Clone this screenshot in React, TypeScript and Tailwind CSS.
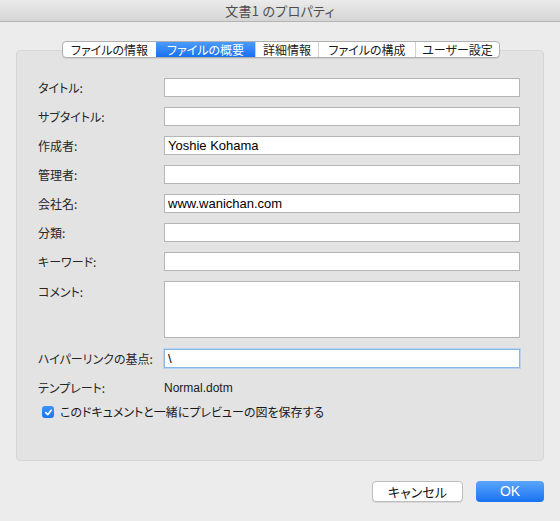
const jp = { fontFamily: '"Noto Sans CJK JP", "Liberation Sans", sans-serif' };
const latin = { fontFamily: '"Liberation Sans", "Noto Sans CJK JP", sans-serif' };

const tabs = ['ファイルの情報', 'ファイルの概要', '詳細情報', 'ファイルの構成', 'ユーザー設定'];
const tabWidths = ['w-[93px]', 'w-[99px]', 'w-[63px]', 'w-[97px]', 'w-[84px]'];

function Field({ label, value, focused }: { label: string; value?: string; focused?: boolean }) {
  return (
    <div className="flex items-center h-[19px]">
      <div className="w-[126px] text-[12px] text-[#262626] leading-none">{label}</div>
      <div
        className={`flex-1 h-[19px] bg-white flex items-center px-[3px] text-[13px] text-black ${
          focused ? 'border border-[#8cb6e6] shadow-[0_0_0_1px_#b7d3f2]' : 'border border-[#b5b5b5]'
        }`}
        style={latin}
      >
        {value}
      </div>
    </div>
  );
}

export default function App() {
  return (
    <div
      className="w-[560px] h-[521px] bg-[#ececec] flex flex-col overflow-hidden [font-feature-settings:'palt']"
      style={jp}
    >
      <div className="h-[22px] flex-shrink-0 flex items-center justify-center bg-gradient-to-b from-[#ebebeb] to-[#d5d5d5] border-b border-[#b4b4b4]">
        <span className="text-[13px] text-[#4d4d4d] tracking-[0.3px]">文書1 のプロパティ</span>
      </div>

      <div className="flex justify-center mt-[19px] relative z-10 pl-[2px]">
        <div className="flex h-[17px] bg-white border border-[#b0b0b0] rounded-[4px] overflow-hidden shadow-[0_1px_0_rgba(0,0,0,0.08)]">
          {tabs.map((t, i) => (
            <div
              key={t}
              className={`${tabWidths[i]} flex items-center justify-center text-[12px] leading-none ${
                i === 1
                  ? 'bg-gradient-to-b from-[#4a9bf9] to-[#1870f0] text-white'
                  : 'text-[#1a1a1a]'
              } ${i > 1 ? 'border-l border-[#d0d0d0]' : ''}`}
            >
              {t}
            </div>
          ))}
        </div>
      </div>

      <div className="mx-[16px] mt-[-8px] h-[411px] bg-[#e3e3e3] border border-[#d6d6d6] rounded-[4px] pt-[27px] pl-[21px] pr-[23px] flex flex-col">
        <div className="flex flex-col gap-[10px]">
          <Field label="タイトル:" />
          <Field label="サブタイトル:" />
          <Field label="作成者:" value="Yoshie Kohama" />
          <Field label="管理者:" />
          <Field label="会社名:" value="www.wanichan.com" />
          <Field label="分類:" />
          <Field label="キーワード:" />
          <div className="flex">
            <div className="w-[126px] text-[12px] text-[#262626] leading-none pt-[5px]">コメント:</div>
            <div className="flex-1 h-[57px] bg-white border border-[#b5b5b5]" />
          </div>
        </div>
        <div className="mt-[11px]">
          <Field label="ハイパーリンクの基点:" value="\" focused />
        </div>
        <div className="flex items-center mt-[10px] h-[19px]">
          <div className="w-[126px] text-[12px] text-[#262626] leading-none">テンプレート:</div>
          <div className="text-[12px] text-[#1a1a1a]" style={latin}>
            Normal.dotm
          </div>
        </div>
        <div className="flex items-center mt-[9px] pl-[4px] gap-[6px]">
          <div className="w-[12px] h-[12px] rounded-[3px] bg-gradient-to-b from-[#3f94f8] to-[#1a72f0] flex items-center justify-center">
            <svg width="9" height="9" viewBox="0 0 10 10">
              <path d="M2 5.2 L4.2 7.5 L8 2.5" stroke="white" strokeWidth="1.8" fill="none" strokeLinecap="round" strokeLinejoin="round" />
            </svg>
          </div>
          <span className="text-[12px] text-[#1a1a1a] leading-none">このドキュメントと一緒にプレビューの図を保存する</span>
        </div>
      </div>

      <div className="flex justify-end gap-[13px] mt-[20px] pr-[16px]">
        <div className="w-[91px] h-[21px] bg-white border border-[#bdbdbd] rounded-[4px] flex items-center justify-center text-[13px] text-[#111] shadow-[0_1px_0_rgba(0,0,0,0.08)]">
          キャンセル
        </div>
        <div
          className="w-[68px] h-[21px] rounded-[4px] bg-gradient-to-b from-[#5aa5fb] to-[#1572f0] flex items-center justify-center text-[14px] text-white"
          style={latin}
        >
          OK
        </div>
      </div>
    </div>
  );
}
